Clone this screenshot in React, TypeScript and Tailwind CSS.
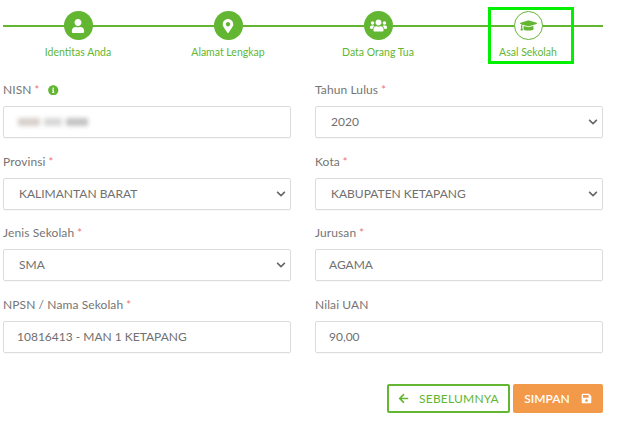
import { FaUser, FaMapMarkerAlt, FaUsers, FaGraduationCap, FaInfoCircle, FaArrowLeft, FaSave, FaChevronDown } from "react-icons/fa";
import type { ReactNode } from "react";

const font = { fontFamily: '"Lato", "Noto Sans", sans-serif' };

function Step({ icon, label, outline }: { icon: ReactNode; label: string; outline?: boolean }) {
  return (
    <div className="flex flex-col items-center">
      <div
        className={
          outline
            ? "relative z-10 flex h-[29px] w-[29px] items-center justify-center rounded-full border border-[#62b632] bg-white text-[17px] text-[#62b632]"
            : "relative z-10 flex h-[29px] w-[29px] items-center justify-center rounded-full bg-[#62b632] text-[14px] text-white"
        }
      >
        {icon}
      </div>
      <div className="mt-[5px] text-[10.5px] leading-[14px] text-[#62b632]">{label}</div>
    </div>
  );
}

function Label({ text, required, info }: { text: string; required?: boolean; info?: boolean }) {
  return (
    <div className="flex h-[18px] items-center text-[12px] leading-[18px] tracking-[0.1px] text-[#757575]">
      <span>{text}</span>
      {required && <span className="ml-[3px] text-[11px] text-[#f07070]">*</span>}
      {info && <FaInfoCircle className="ml-[9px] text-[10.5px] text-[#62b632]" />}
    </div>
  );
}

function Box({ children }: { children: ReactNode }) {
  return (
    <div className="relative flex h-[32px] items-center rounded-[2px] border border-[#dcdcdc] text-[12px] text-[#707070] shadow-[0_1px_1px_rgba(0,0,0,0.03)]">
      {children}
    </div>
  );
}

function Input({ value }: { value: string }) {
  return (
    <Box>
      <span className="pl-[13px]">{value}</span>
    </Box>
  );
}

function Select({ value }: { value: string }) {
  return (
    <Box>
      <span className="pl-[15px]">{value}</span>
      <FaChevronDown className="absolute right-[4px] top-[10px] text-[10px] text-[#666666]" />
    </Box>
  );
}

function Field({ label, required, info, children }: { label: string; required?: boolean; info?: boolean; children: ReactNode }) {
  return (
    <div className="flex flex-col gap-[7px]">
      <Label text={label} required={required} info={info} />
      {children}
    </div>
  );
}

export default function App() {
  return (
    <div className="relative h-[422px] w-[628px] overflow-hidden bg-white pl-[3px] pt-[11px]" style={font}>
      <div className="relative w-[600px]">
        <div className="absolute left-0 right-0 top-[14px] h-[2px] bg-[#62b632]" />
        <div className="grid grid-cols-4">
          <Step icon={<FaUser />} label="Identitas Anda" />
          <Step icon={<FaMapMarkerAlt />} label="Alamat Lengkap" />
          <Step icon={<FaUsers className="text-[17px]" />} label="Data Orang Tua" />
          <Step icon={<FaGraduationCap />} label="Asal Sekolah" outline />
        </div>
      </div>
      <div className="absolute left-[488px] top-[7px] h-[57px] w-[86px] border-[3px] border-[#00f000]" />

      <div className="mt-[22px] grid w-[600px] grid-cols-[288px_288px] gap-x-[24px] gap-y-[14.5px]">
        <Field label="NISN" required info>
          <Box>
            <div className="ml-[14px] flex gap-[4px] blur-[2px]">
              <div className="h-[8px] w-[22px] bg-[#d8d0cc]" />
              <div className="h-[8px] w-[18px] bg-[#d8d8d8]" />
              <div className="h-[8px] w-[22px] bg-[#c4c4c4]" />
            </div>
          </Box>
        </Field>
        <Field label="Tahun Lulus" required>
          <Select value="2020" />
        </Field>
        <Field label="Provinsi" required>
          <Select value="KALIMANTAN BARAT" />
        </Field>
        <Field label="Kota" required>
          <Select value="KABUPATEN KETAPANG" />
        </Field>
        <Field label="Jenis Sekolah" required>
          <Select value="SMA" />
        </Field>
        <Field label="Jurusan" required>
          <Input value="AGAMA" />
        </Field>
        <Field label="NPSN / Nama Sekolah" required>
          <Input value="10816413 - MAN 1 KETAPANG" />
        </Field>
        <Field label="Nilai UAN">
          <Input value="90,00" />
        </Field>
      </div>

      <div className="mt-[31.5px] flex w-[600px] justify-end gap-[3px]">
        <button className="flex h-[29px] w-[123px] items-center justify-center gap-[10px] rounded-[2px] border-2 border-[#62b632] bg-white text-[12px] tracking-[0.2px] text-[#62b632]">
          <FaArrowLeft className="text-[11px]" />
          <span>SEBELUMNYA</span>
        </button>
        <button className="flex h-[29px] w-[90px] items-center justify-center gap-[11px] rounded-[2px] bg-[#f29a4a] text-[12px] font-semibold text-white">
          <span>SIMPAN</span>
          <FaSave className="text-[11px]" />
        </button>
      </div>
    </div>
  );
}
